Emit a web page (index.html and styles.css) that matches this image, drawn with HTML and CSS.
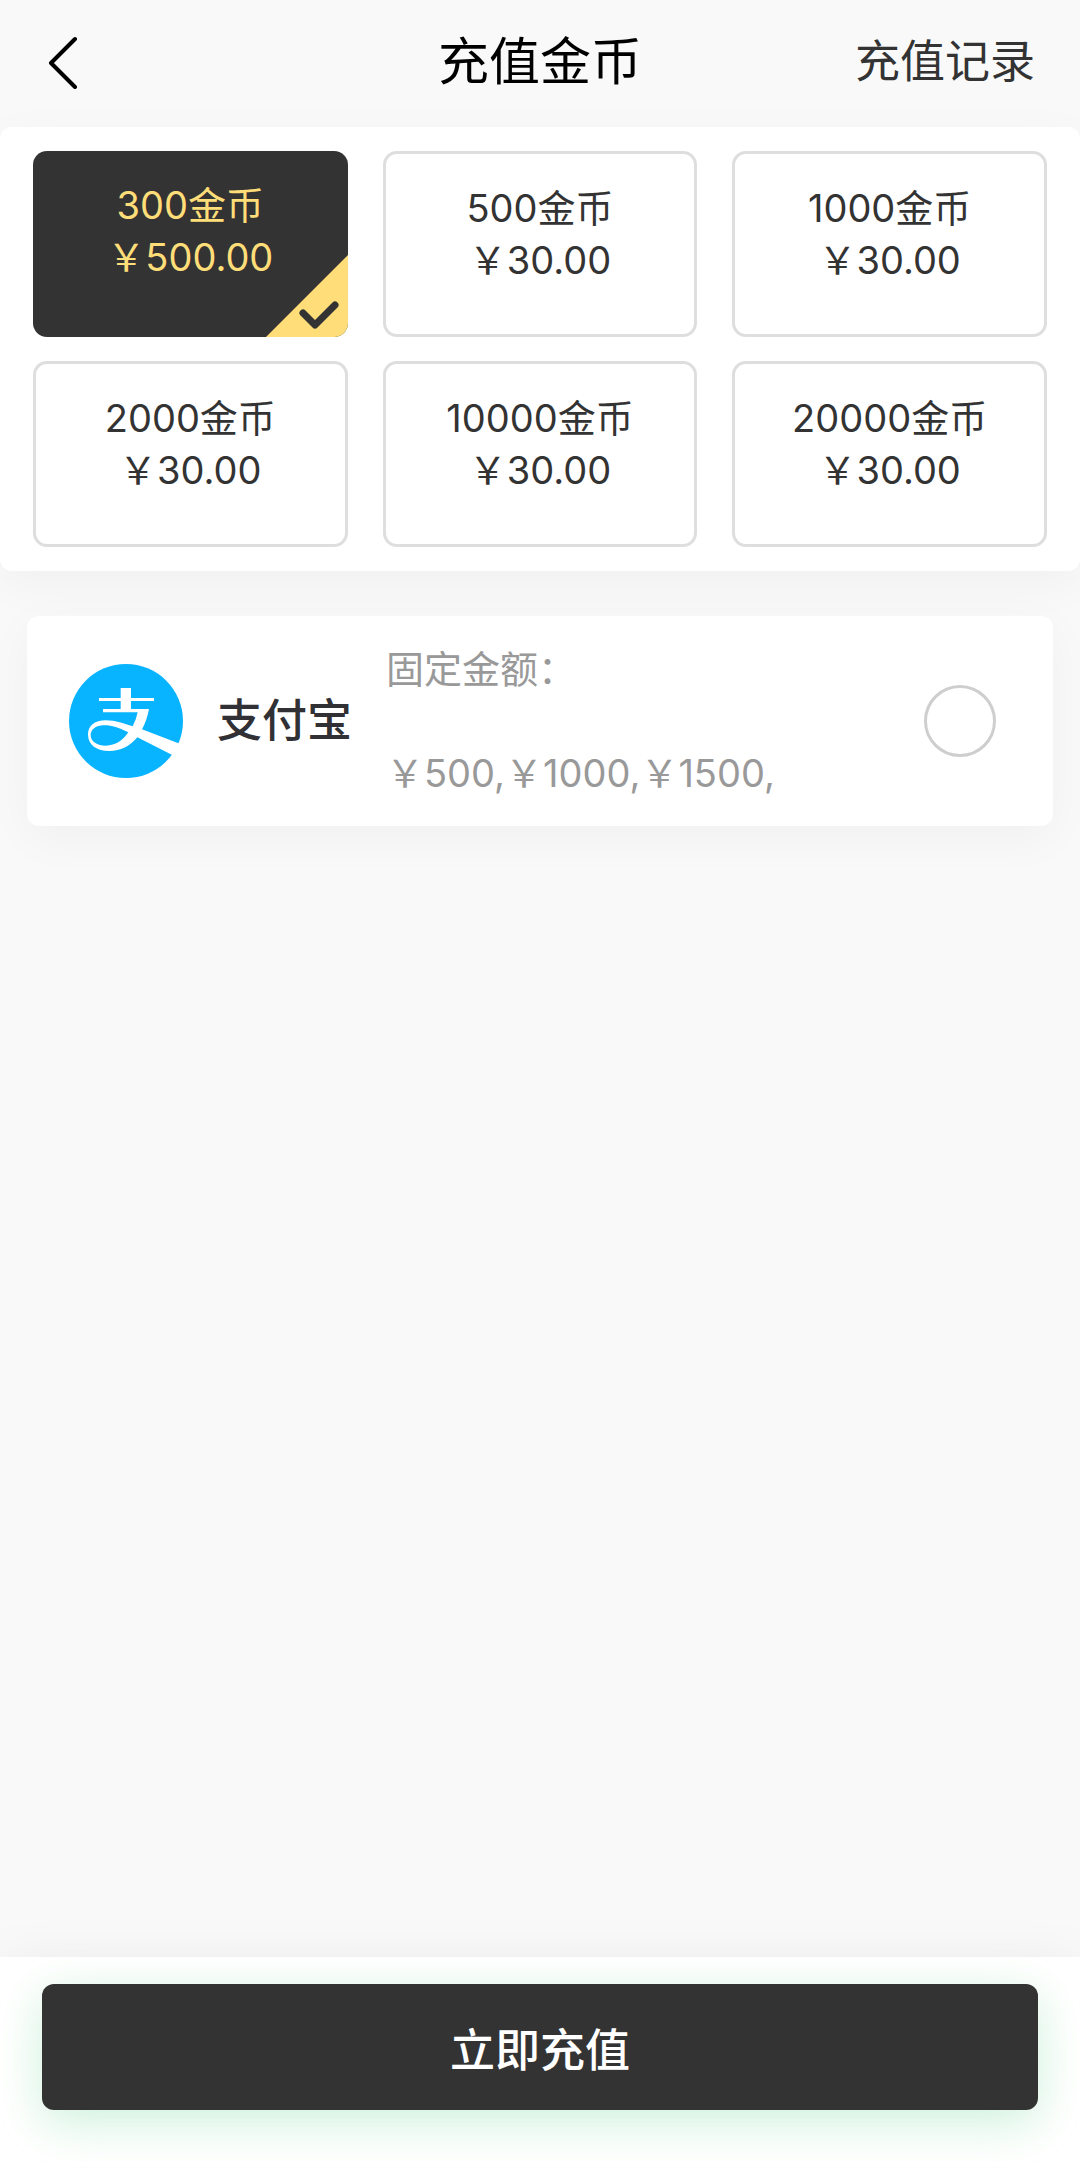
FILE: index.html
```html
<!DOCTYPE html>
<html lang="zh-CN">
<head>
    <meta charset="UTF-8">
    <meta name="viewport" content="width=device-width, initial-scale=1.0">
    <title>充值金币</title>
    <link rel="stylesheet" href="styles.css">
</head>
<body>
    <header class="navbar">
        <button type="button" class="back" aria-label="返回">
            <svg width="30" height="54" viewBox="0 0 30 54" fill="none" stroke="#000" stroke-width="4" stroke-linecap="round" stroke-linejoin="round">
                <path d="M27 4L3 28l24 24"/>
            </svg>
        </button>
        <h1>充值金币</h1>
        <a class="record" href="#">充值记录</a>
    </header>

    <form class="recharge">
        <div class="packages">
            <label class="package">
                <input type="radio" name="package" value="300" checked>
                <span>300金币</span>
                <span>￥500.00</span>
                <svg class="tick" width="82" height="82" viewBox="0 0 82 82">
                    <path d="M82 0v82H0z" fill="#ffde79"/>
                    <path d="M37 58l12 12 20-20" fill="none" stroke="#333" stroke-width="7" stroke-linecap="round" stroke-linejoin="round"/>
                </svg>
            </label>
            <label class="package">
                <input type="radio" name="package" value="500">
                <span>500金币</span>
                <span>￥30.00</span>
            </label>
            <label class="package">
                <input type="radio" name="package" value="1000">
                <span>1000金币</span>
                <span>￥30.00</span>
            </label>
            <label class="package">
                <input type="radio" name="package" value="2000">
                <span>2000金币</span>
                <span>￥30.00</span>
            </label>
            <label class="package">
                <input type="radio" name="package" value="10000">
                <span>10000金币</span>
                <span>￥30.00</span>
            </label>
            <label class="package">
                <input type="radio" name="package" value="20000">
                <span>20000金币</span>
                <span>￥30.00</span>
            </label>
        </div>

        <label class="payment">
            <svg class="pay-logo" width="114" height="114" viewBox="27 42 342 342">
                <circle cx="198" cy="213" r="171" fill="#08b3ff"/>
                <path fill="#fff" fill-rule="evenodd" d="M182 114h31v30h69v9h-69v24h54Q261 210 246 238L372 286L350 322L232 262Q198 303 148 303C110 303 84 284 84 254C84 226 105 211 137 211C167 211 193 221 218 229Q229 209 233 187H129V177H182v-24h-65v-9h65zM205 247C174 231 149 224 127 226C105 228 92 240 92 255C92 275 111 287 138 287C166 287 189 271 205 247z"/>
            </svg>
            <span class="pay-name">支付宝</span>
            <span class="pay-info">
                <span>固定金额：</span>
                <span>￥500,￥1000,￥1500,</span>
            </span>
            <input type="radio" name="payment" value="alipay">
        </label>

        <div class="footer">
            <button type="submit" class="submit">立即充值</button>
        </div>
    </form>
</body>
</html>
```

FILE: styles.css
```css
* {
    box-sizing: border-box;
}
body {
    margin: 0;
    min-height: 100vh;
    display: flex;
    flex-direction: column;
    background-color: #f9f9f9;
    color: #333;
    font-family: Inter, "Noto Sans CJK SC", sans-serif;
    font-size: 38px;
    line-height: 52px;
}
button {
    border: none;
    font-family: inherit;
    cursor: pointer;
}
.navbar {
    display: grid;
    grid-template-columns: 1fr auto 1fr;
    align-items: center;
    height: 127px;
    padding: 0 45px 4px;
}
.navbar h1 {
    margin: 0;
    color: #000;
    font-size: 51px;
    font-weight: 400;
}
.back {
    justify-self: start;
    display: flex;
    padding: 0 3px;
    background: none;
}
.record {
    justify-self: end;
    color: #333;
    font-size: 45px;
    text-decoration: none;
}
.recharge {
    flex: 1;
    display: flex;
    flex-direction: column;
}
.packages {
    display: grid;
    grid-template-columns: repeat(3, 1fr);
    gap: 24px 35px;
    padding: 24px 33px;
    border-radius: 12px;
    background-color: #fff;
    box-shadow: 0 12px 48px rgba(0, 0, 0, 0.04);
}
.package {
    position: relative;
    display: flex;
    flex-direction: column;
    align-items: center;
    min-height: 186px;
    padding: 28px 0;
    border: 3px solid #dedede;
    border-radius: 14px;
    overflow: hidden;
    cursor: pointer;
}
.package input {
    position: absolute;
    inset: 0;
    margin: 0;
    appearance: none;
}
.package:has(input:checked) {
    border: none;
    background-color: #333;
    color: #ffde79;
}
.tick {
    position: absolute;
    right: 0;
    bottom: 0;
}
.payment {
    display: flex;
    align-items: center;
    margin: 45px 27px;
    padding: 27px 57px 27px 42px;
    border-radius: 12px;
    background-color: #fff;
    box-shadow: 0 12px 48px rgba(0, 0, 0, 0.04);
    cursor: pointer;
}
.pay-name {
    margin: 0 34px;
    color: #303035;
    font-size: 45px;
    font-weight: 500;
}
.pay-info {
    flex: 1;
    display: flex;
    flex-direction: column;
    gap: 52px;
    color: #999;
}
.payment input {
    width: 72px;
    height: 72px;
    margin: 0;
    border: 3px solid #cecece;
    border-radius: 50%;
    appearance: none;
}
.payment input:checked {
    border: 22px solid #333;
}
.footer {
    margin-top: auto;
    padding: 27px 42px 58px;
    background-color: #fff;
    box-shadow: 0 0 48px rgba(0, 0, 0, 0.05);
}
.submit {
    display: block;
    width: 100%;
    height: 126px;
    border-radius: 12px;
    background-color: #333;
    color: #fff;
    font-size: 45px;
    font-weight: 500;
    box-shadow: 0 12px 48px rgba(0, 187, 77, 0.2);
}
```
